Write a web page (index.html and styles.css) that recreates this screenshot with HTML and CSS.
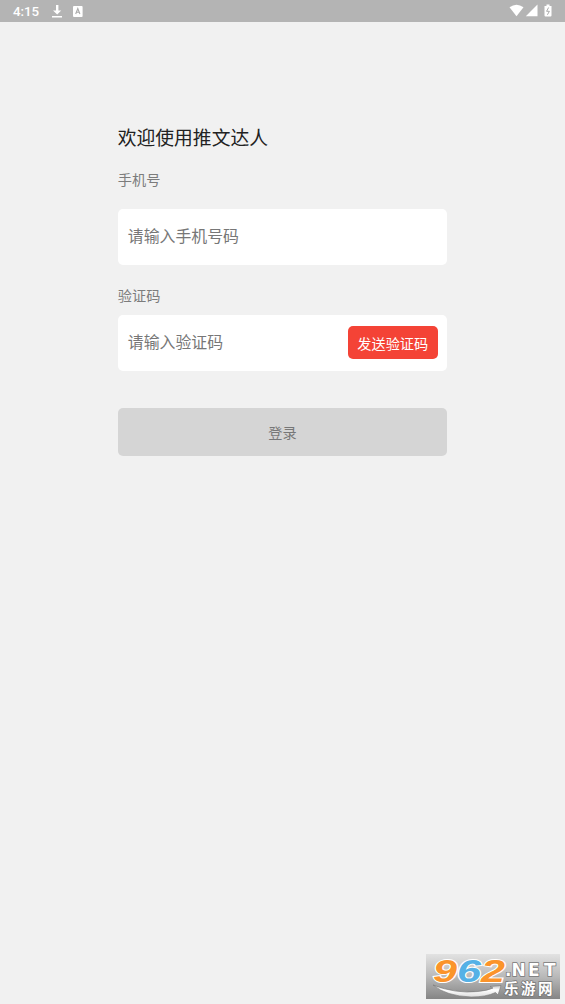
FILE: index.html
```html
<!DOCTYPE html>
<html lang="zh-CN">
<head>
<meta charset="utf-8">
<title>推文达人</title>
<link rel="stylesheet" href="styles.css">
</head>
<body>
<header class="status">
  <span class="clock">4:15</span>
  <svg class="download" width="10" height="13" viewBox="0 0 10 13"><path d="M4 0h2.4v5.5h2.8L5.2 9.6 1 5.5h3zM0 11h10v1.5H0z" fill="#fff"/></svg>
  <svg class="keyboard" width="10" height="11" viewBox="0 0 10 11"><rect width="9.6" height="11" rx="1" fill="#fff"/><path d="M2.7 8l2.1-5.5L6.9 8M3.5 6.2h2.6" fill="none" stroke="#aaa" stroke-width="1.1"/></svg>
  <svg class="signals" width="44" height="14" viewBox="0 0 44 14">
    <path d="M.5 3.3Q7.5-1.8 14.5 3.3L7.5 12.2z" fill="#fff"/>
    <path d="M28.5.5v11.8H16.8z" fill="#fff"/>
    <path d="M35.5 2h2V.6h3V2h2v9.5q0 1-1 1h-5q-1 0-1-1z" fill="#fff"/>
    <path d="M39.6 3.5l-2 3.8h2.8l-2 3.5" fill="none" stroke="#aaa" stroke-width="1"/>
  </svg>
</header>
<main class="login">
  <h1 class="title">欢迎使用推文达人</h1>
  <label class="label phone-label">手机号</label>
  <div class="field phone-field"><span class="hint">请输入手机号码</span></div>
  <label class="label code-label">验证码</label>
  <div class="field code-field"><span class="hint">请输入验证码</span><button class="send">发送验证码</button></div>
  <button class="submit">登录</button>
</main>
<svg class="brand" width="134" height="45" viewBox="0 0 134 45">
  <defs>
    <linearGradient id="plate" x1="0" y1="0" x2="0" y2="1"><stop offset="0" stop-color="#e2e2e2"/><stop offset=".5" stop-color="#b9b9b9"/><stop offset="1" stop-color="#858585"/></linearGradient>
    <linearGradient id="swoosh" x1="0" y1="0" x2="0" y2="1"><stop offset="0" stop-color="#bbb"/><stop offset=".4" stop-color="#fff"/><stop offset="1" stop-color="#ddd"/></linearGradient>
  </defs>
  <rect width="134" height="45" fill="url(#plate)"/>
  <g class="digits">
    <text x="7" y="27.5" textLength="24" lengthAdjust="spacingAndGlyphs" fill="#fb942b">9</text>
    <text x="31" y="27.5" textLength="24" lengthAdjust="spacingAndGlyphs" fill="#55b1e6">6</text>
    <text x="55" y="27.5" textLength="24" lengthAdjust="spacingAndGlyphs" fill="#fb942b">2</text>
  </g>
  <path d="M7 31Q30 40 52 37.5 62 36.500 67 34L64 32.500 75 31.500 72 41 69.500 38.500Q60 43 45 43 20 42 7 31z" fill="url(#swoosh)" stroke="#777" stroke-width=".6"/>
  <text class="net" y="21.500" x="79 85.500 102 118">.NET</text>
  <text class="brand-cn" x="78 95 112" y="39.500">乐游网</text>
</svg>
</body>
</html>
```

FILE: styles.css
```css
* { box-sizing: border-box; }
body {
  margin: 0;
  height: 1004px;
  overflow: hidden;
  background: #f1f1f1;
  font-family: "Noto Sans CJK SC", sans-serif;
}
.status {
  display: flex;
  align-items: center;
  height: 22px;
  padding: 0 12px 0 13px;
  background: #b4b4b4;
}
.clock {
  width: 39px;
  color: #fff;
  font: 500 13.3px/22px Roboto, sans-serif;
  padding-top: 1px;
}
.keyboard { margin-left: 11px; }
.signals { margin-left: auto; }
.login {
  display: flex;
  flex-direction: column;
  width: 329.5px;
  margin: 103px auto 0;
}
.title {
  margin: 0;
  color: #222;
  font-size: 18.8px;
  font-weight: 400;
  line-height: 24px;
}
.label {
  color: #7c7c7c;
  font-size: 14.2px;
  line-height: 20px;
}
.phone-label { margin-top: 20px; }
.field {
  display: flex;
  align-items: center;
  justify-content: space-between;
  height: 56px;
  padding: 0 9.5px 0 10px;
  border-radius: 5px;
  background: #fff;
}
.phone-field { margin-top: 20px; }
.code-label { margin-top: 20px; }
.code-field { margin-top: 9.5px; }
.hint {
  padding-bottom: 2px;
  color: #777;
  font-size: 15.9px;
  line-height: 24px;
}
.send, .submit {
  padding: 0;
  border: 0;
  border-radius: 5px;
  font-family: inherit;
  font-size: 14.2px;
}
.send {
  width: 90px;
  height: 33px;
  background: #f44336;
  color: #fff;
}
.submit {
  height: 47.5px;
  margin-top: 37.5px;
  background: #d5d5d5;
  color: #777;
}
.brand {
  position: absolute;
  left: 426px;
  top: 954px;
}
.digits {
  font: italic 700 31px "Liberation Sans", sans-serif;
  stroke: #fff;
  stroke-width: 2px;
  paint-order: stroke;
}
.net {
  font: 700 17px "DejaVu Sans", sans-serif;
  fill: #fff;
  stroke: #777;
  stroke-width: 1.5px;
  paint-order: stroke;
}
.brand-cn {
  font: 700 14.5px "Noto Sans CJK SC", sans-serif;
  fill: #fff;
  stroke: #777;
  stroke-width: 1.5px;
  paint-order: stroke;
}
```
